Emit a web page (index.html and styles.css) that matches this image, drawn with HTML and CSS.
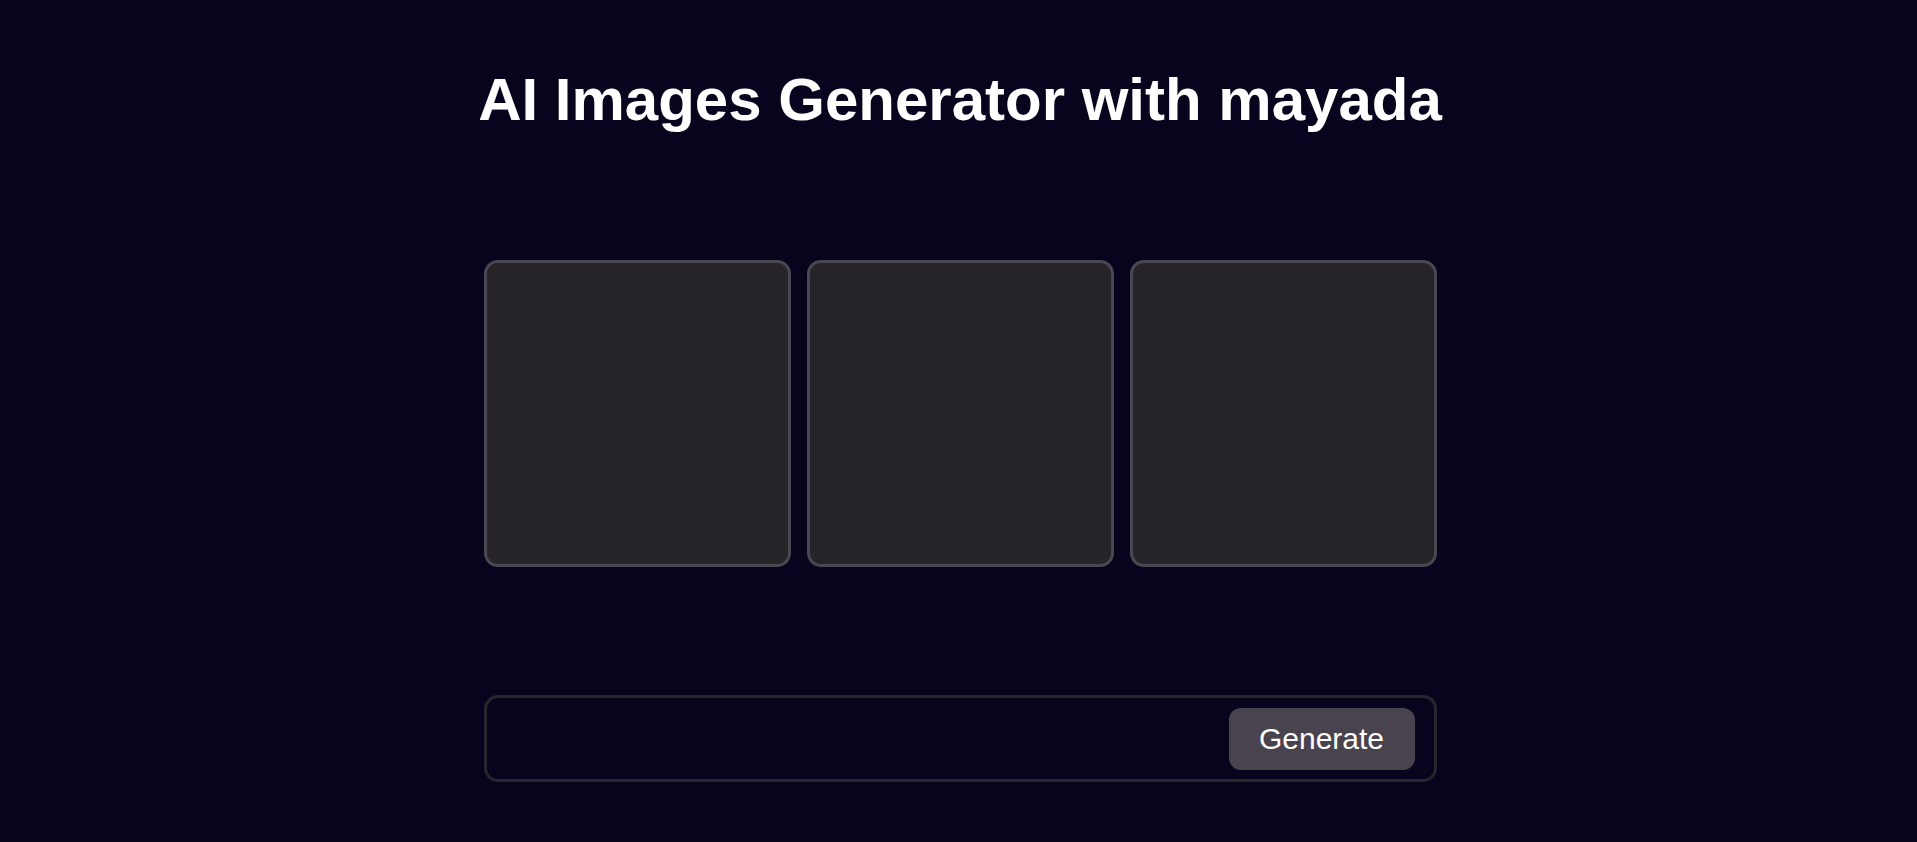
FILE: index.html
```html
<!DOCTYPE html>
<html lang="en">
<head>
<meta charset="utf-8">
<title>AI Images Generator with mayada</title>
<link rel="stylesheet" href="styles.css">
</head>
<body>
<main class="app">
  <h1 class="title">AI Images Generator with mayada</h1>
  <section class="gallery">
    <div class="tile"></div>
    <div class="tile"></div>
    <div class="tile"></div>
  </section>
  <form class="prompt-bar">
    <input class="prompt-input" type="text" aria-label="Prompt">
    <button class="generate-btn" type="button">Generate</button>
  </form>
</main>
</body>
</html>
```
FILE: styles.css
```css
* { box-sizing: border-box; }

html, body {
  margin: 0;
  padding: 0;
  background: #09041d;
  font-family: "Liberation Sans", Arial, sans-serif;
  color: #ffffff;
}

.app {
  display: flex;
  flex-direction: column;
  align-items: center;
  padding-top: 65px;
  padding-left: 3px;
}

.title {
  margin: 0;
  font-size: 60px;
  font-weight: 700;
  line-height: 69px;
  color: #ffffff;
}

.gallery {
  margin-top: 126px;
  width: 953px;
  display: grid;
  grid-template-columns: repeat(3, 1fr);
  gap: 16px;
}

.tile {
  height: 307px;
  background: #262329;
  border: 3px solid #4b4751;
  border-radius: 14px;
}

.prompt-bar {
  margin-top: 128px;
  width: 953px;
  height: 87px;
  display: flex;
  align-items: center;
  gap: 16px;
  padding: 0 19px 0 16px;
  border: 3px solid #28252d;
  border-radius: 14px;
}

.prompt-input {
  flex: 1;
  min-width: 0;
  height: 50px;
  background: transparent;
  border: none;
  outline: none;
  color: #ffffff;
  font-family: inherit;
  font-size: 24px;
}

.generate-btn {
  width: 186px;
  height: 62px;
  border: none;
  border-radius: 12px;
  background: #48434d;
  color: #ffffff;
  font-family: "Liberation Sans", Arial, sans-serif;
  font-size: 30px;
  padding: 0;
  cursor: pointer;
}
```
